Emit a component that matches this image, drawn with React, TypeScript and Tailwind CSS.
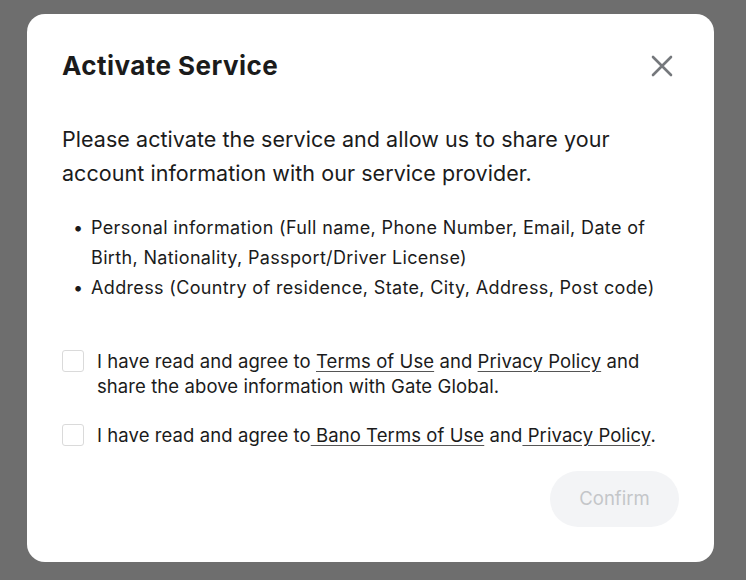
import React, { useState } from "react";

export default function App() {
  const [a, setA] = useState(false);
  const [b, setB] = useState(false);

  return (
    <div className="w-[746px] h-[580px] bg-[#6e6e6e] pt-[14px] pl-[27px] font-['Inter',sans-serif] text-[#1b1b1b]">
      <div className="w-[687px] h-[548px] bg-white rounded-[18px] px-[35px] pt-[35px] flex flex-col">
        <div className="flex items-center justify-between">
          <h1 className="text-[26px] leading-[34px] font-bold tracking-[0.45px]">Activate Service</h1>
          <button className="mr-[6px] text-[#75787c]">
            <svg width="22" height="22" viewBox="0 0 22 22" fill="none" stroke="currentColor" strokeWidth="2.6" strokeLinecap="round">
              <path d="M2 2 L20 20 M20 2 L2 20" />
            </svg>
          </button>
        </div>

        <p className="mt-[39px] text-[21.5px] leading-[34px] tracking-[0.05px]">
          Please activate the service and allow us to share your account information with our service provider.
        </p>

        <ul className="mt-[23px] pl-[11px] text-[18px] leading-[30px] tracking-[0.35px]">
          <li className="flex">
            <span className="w-[18px] shrink-0">•</span>
            <span>Personal information (Full name, Phone Number, Email, Date of Birth, Nationality, Passport/Driver License)</span>
          </li>
          <li className="flex">
            <span className="w-[18px] shrink-0">•</span>
            <span>Address (Country of residence, State, City, Address, Post code)</span>
          </li>
        </ul>

        <div className="mt-[46px] flex flex-col gap-[24px] text-[18.5px] leading-[25px] tracking-[0.08px]">
          <label className="flex items-start gap-[13px]">
            <input type="checkbox" checked={a} onChange={() => setA(!a)} className="appearance-none mt-[1px] w-[22px] h-[22px] shrink-0 border-[1.5px] border-[#dadada] rounded-[3px]" />
            <span>
              I have read and agree to <a className="underline underline-offset-[3px] decoration-[#555]">Terms of Use</a> and{" "}
              <a className="underline underline-offset-[3px] decoration-[#555]">Privacy Policy</a> and share the above information with Gate Global.
            </span>
          </label>
          <label className="flex items-start gap-[13px]">
            <input type="checkbox" checked={b} onChange={() => setB(!b)} className="appearance-none mt-[1px] w-[22px] h-[22px] shrink-0 border-[1.5px] border-[#dadada] rounded-[3px]" />
            <span>
              I have read and agree to<a className="underline underline-offset-[3px] decoration-[#555]"> Bano Terms of Use</a> and
              <a className="underline underline-offset-[3px] decoration-[#555]"> Privacy Policy</a>.
            </span>
          </label>
        </div>

        <div className="mt-[23px] flex justify-end">
          <button className="w-[129px] h-[56px] rounded-full bg-[#f3f4f6] text-[#c4c6c9] text-[18.5px]">
            Confirm
          </button>
        </div>
      </div>
    </div>
  );
}
